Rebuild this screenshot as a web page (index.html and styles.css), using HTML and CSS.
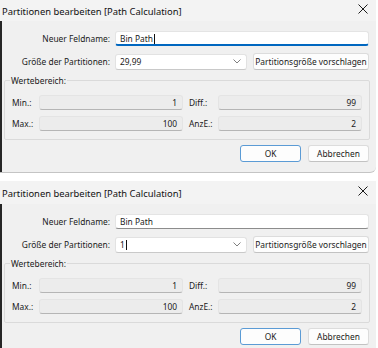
FILE: index.html
```html
<!DOCTYPE html>
<html lang="de">
<head>
  <meta charset="UTF-8">
  <meta name="viewport" content="width=device-width, initial-scale=1.0">
  <title>Partitionen bearbeiten</title>
  <link rel="stylesheet" href="styles.css">
</head>
<body>
  <div class="dialog">
    <div class="titlebar">
      <span class="title">Partitionen bearbeiten [Path Calculation]</span>
      <svg class="close" width="10" height="10" viewBox="0 0 10 10"><path d="M0.5 0.5L9.5 9.5M9.5 0.5L0.5 9.5" stroke="#1b1b1b" stroke-width="1"/></svg>
    </div>
    <div class="body">
      <div class="form">
        <label class="lbl">Neuer Feldname:</label>
        <div class="input focused">Bin Path <span class="caret"></span></div>
        <label class="lbl">Größe der Partitionen:</label>
        <div class="size-row">
          <div class="combo">
            <span>29,99</span>
            <svg class="chevron" width="8" height="5" viewBox="0 0 8 5"><path d="M0.5 0.5L4 4L7.5 0.5" fill="none" stroke="#707070" stroke-width="0.9"/></svg>
          </div>
          <div class="btn">Partitionsgröße vorschlagen</div>
        </div>
      </div>
      <fieldset class="group">
        <legend>Wertebereich:</legend>
        <div class="range">
          <span class="rlbl">Min.:</span><div class="ro">1</div>
          <span class="rlbl wide">Diff.:</span><div class="ro">99</div>
          <span class="rlbl">Max.:</span><div class="ro">100</div>
          <span class="rlbl wide">AnzE.:</span><div class="ro">2</div>
        </div>
      </fieldset>
      <div class="actions">
        <div class="btn default">OK</div>
        <div class="btn">Abbrechen</div>
      </div>
    </div>
  </div>

  <div class="dialog second">
    <div class="titlebar">
      <span class="title">Partitionen bearbeiten [Path Calculation]</span>
      <svg class="close" width="10" height="10" viewBox="0 0 10 10"><path d="M0.5 0.5L9.5 9.5M9.5 0.5L0.5 9.5" stroke="#1b1b1b" stroke-width="1"/></svg>
    </div>
    <div class="body">
      <div class="form">
        <label class="lbl">Neuer Feldname:</label>
        <div class="input">Bin Path</div>
        <label class="lbl">Größe der Partitionen:</label>
        <div class="size-row">
          <div class="combo">
            <span>1<span class="caret"></span></span>
            <svg class="chevron" width="8" height="5" viewBox="0 0 8 5"><path d="M0.5 0.5L4 4L7.5 0.5" fill="none" stroke="#707070" stroke-width="0.9"/></svg>
          </div>
          <div class="btn">Partitionsgröße vorschlagen</div>
        </div>
      </div>
      <fieldset class="group">
        <legend>Wertebereich:</legend>
        <div class="range">
          <span class="rlbl">Min.:</span><div class="ro">1</div>
          <span class="rlbl wide">Diff.:</span><div class="ro">99</div>
          <span class="rlbl">Max.:</span><div class="ro">100</div>
          <span class="rlbl wide">AnzE.:</span><div class="ro">2</div>
        </div>
      </fieldset>
      <div class="actions">
        <div class="btn default">OK</div>
        <div class="btn">Abbrechen</div>
      </div>
    </div>
  </div>
</body>
</html>
```

FILE: styles.css
```css
body {
  margin: 0;
  background-color: #ffffff;
  font-family: "Noto Sans", Arial, sans-serif;
  font-size: 8.4px;
  color: #1a1a1a;
  width: 378px;
  height: 348px;
  overflow: hidden;
}
.dialog {
  width: 376px;
  background-color: #f0f0f0;
  border-bottom: 1px solid #c4c4c4;
  border-bottom-right-radius: 6px;
}
.dialog.second {
  margin-top: 8px;
  border-bottom: none;
}
.titlebar {
  height: 21px;
  display: flex;
  align-items: center;
  justify-content: space-between;
  padding: 0 8px 0 2px;
  background-color: #f3f3f3;
}
.second .titlebar {
  height: 23px;
}
.title {
  font-size: 9.4px;
  color: #111;
  margin-top: 2px;
}
.close {
  margin-top: -3px;
}
.body {
  box-shadow: inset 2px 0 #262626;
  padding: 10px 7px 10px 2px;
}
.form {
  display: grid;
  grid-template-columns: 108px 1fr;
  column-gap: 5px;
  row-gap: 7px;
  align-items: center;
}
.lbl {
  text-align: right;
  white-space: nowrap;
}
.input {
  height: 15px;
  box-sizing: border-box;
  background-color: #ffffff;
  border: 1px solid #e4e4e4;
  border-bottom-color: #8c8c8c;
  border-radius: 3px;
  padding: 0 4px;
  display: flex;
  align-items: center;
}
.input.focused {
  border-bottom: 2px solid #0067c0;
  padding-top: 1px;
}
.caret {
  display: inline-block;
  width: 1px;
  height: 10px;
  background-color: #111;
  vertical-align: middle;
  margin-left: 1px;
}
.size-row {
  display: flex;
  gap: 6px;
  align-items: center;
}
.combo {
  width: 132px;
  height: 16px;
  box-sizing: border-box;
  background-color: #ffffff;
  border: 1px solid #e2e2e2;
  border-bottom-color: #c9c9c9;
  border-radius: 3px;
  padding: 0 5px 0 4px;
  display: flex;
  align-items: center;
  justify-content: space-between;
}
.btn {
  height: 17px;
  box-sizing: border-box;
  background-color: #fdfdfd;
  border: 1px solid #dcdcdc;
  border-bottom-color: #c2c2c2;
  border-radius: 3px;
  display: flex;
  align-items: center;
  justify-content: center;
  white-space: nowrap;
}
.size-row .btn {
  flex: 1;
}
.group {
  margin: 5px 0 0 2px;
  padding: 0 7px 8px;
  border: 1px solid #dadada;
  border-radius: 2px;
}
.group legend {
  padding: 0 1px;
  margin-left: -2px;
}
.range {
  display: grid;
  grid-template-columns: 27px 144px 35px 144px;
  row-gap: 6px;
  margin-top: 9px;
  align-items: center;
}
.rlbl.wide {
  padding-left: 6px;
}
.ro {
  height: 15px;
  box-sizing: border-box;
  background-color: #ececec;
  border: 1px solid #e4e4e4;
  border-bottom-color: #b5b5b5;
  border-radius: 3px;
  padding: 0 5px;
  display: flex;
  align-items: center;
  justify-content: flex-end;
}
.actions {
  display: flex;
  justify-content: flex-end;
  gap: 7px;
  margin-top: 5px;
}
.actions .btn {
  width: 61px;
}
.btn.default {
  border-color: #5b9bd5;
}
```
